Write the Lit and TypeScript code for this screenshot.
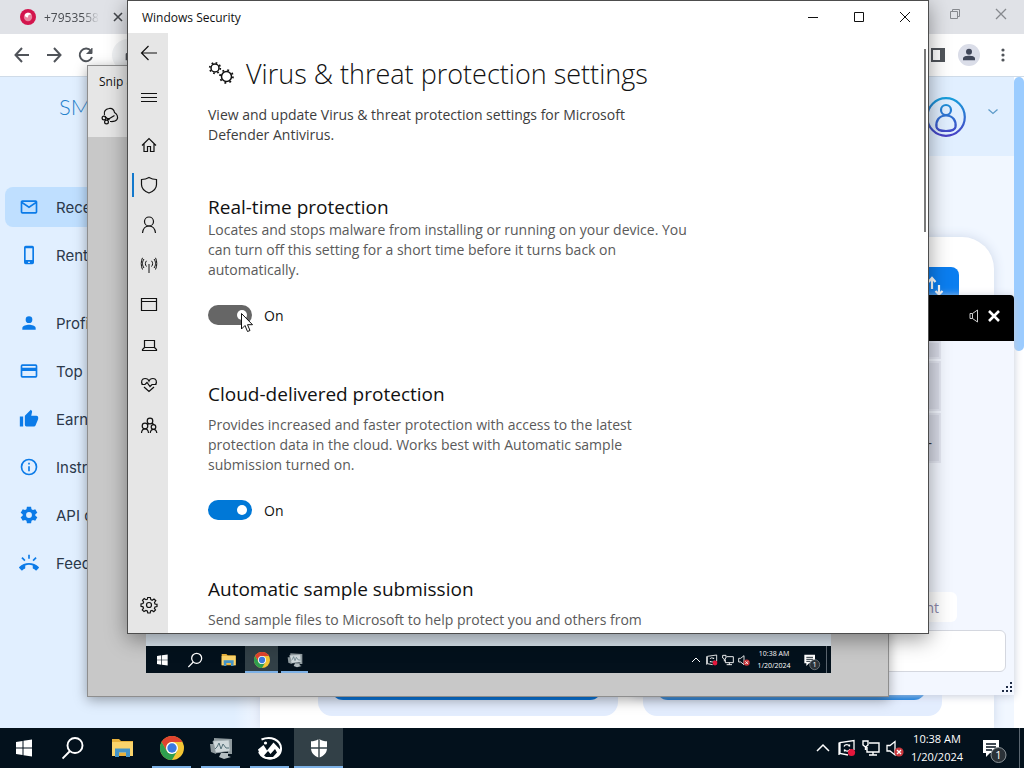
import { LitElement, html, svg, css } from "lit";
import { customElement, property } from "lit/decorators.js";

const navIcons: Record<string, unknown> = {
  back: svg`<path d="M19 12H5M11.500 5L4.500 12L11.500 19M4.500 12H20"/>`,
  menu: svg`<path d="M4 8.500H20M4 12.500H20M4 16.500H20"/>`,
  home: svg`<path d="M5 12.500L12 5.500L19 12.500M7 11V18.500H10.500V13.500H13.500V18.500H17V11"/>`,
  shield: svg`<path d="M12 4.500C14.500 6 17 6.500 19.500 6.500V11.500C19.500 16 16 18.500 12 20C8 18.500 4.500 16 4.500 11.500V6.500C7 6.500 9.500 6 12 4.500Z"/>`,
  person: svg`<circle cx="12" cy="8.500" r="4.500"/><path d="M5.500 20C6 15.500 8.500 13 12 13S18 15.500 18.500 20"/>`,
  network: svg`<path d="M12 11V20M9.500 13.500C8 11.800 8 9.500 9.500 7.800M14.500 13.500C16 11.800 16 9.500 14.500 7.800M7 15C5 12.500 5 8.500 7 6M17 15C19 12.500 19 8.500 17 6M5.500 16.500C3.800 13 3.800 8 5.500 4.800M18.500 16.500C20.200 13 20.200 8 18.500 4.800" stroke-width="1"/>`,
  app: svg`<path d="M4.500 5.500H19.500V17.500H4.500ZM4.500 8.500H19.500"/>`,
  device: svg`<path d="M7.500 7.500H17.500V14.500H7.500ZM7.500 14.500L5.500 16.500V17.500H19.500V16.500L17.500 14.500"/>`,
  health: svg`<path d="M5.500 11.500C3.500 8.500 5 5.500 8 5.500C10 5.500 11.500 6.500 12 8C12.500 6.500 14 5.500 16 5.500C19 5.500 20.500 8.500 18.500 11.500M4.500 11.500H8L10 9.500L13 13.500L15 11.500H19.500M7 14L12 18.500L17 14"/>`,
  family: svg`<circle cx="13" cy="8" r="2.800"/><circle cx="8" cy="13" r="2.800"/><circle cx="16.500" cy="14" r="2.300"/><path d="M4.500 20C4.700 17 6 15.800 8 15.800S11.300 17 11.500 20M13.200 20C13.500 17.500 14.500 16.300 16.500 16.300S19.500 17.500 19.800 20M10 11L12 10.800M15 10L17 11.700"/>`,
  gear: svg`<circle cx="12" cy="12" r="2.500"/><path d="M10.700 4.500H13.300L13.800 6.600L15.200 7.200L17 6L18.800 7.700L17.500 9.500L18 11L20 11.300V13.500L18 14L17.400 15.400L18.500 17L16.800 18.700L15 17.500L13.600 18L13.200 20H10.800L10.300 18L8.900 17.500L7 18.600L5.300 17L6.500 15.200L6 13.800L4 13.300V11L6 10.500L6.600 9L5.500 7.300L7.200 5.500L9 6.700L10.300 6.300Z"/>`,
};

const siteIcons: Record<string, unknown> = {
  mail: svg`<path fill-rule="evenodd" d="M4 4H20C21 4 22 5 22 6V18C22 19 21 20 20 20H4C3 20 2 19 2 18V6C2 5 3 4 4 4ZM4 8V18H20V8L12 13.500ZM4.500 6L12 11L19.500 6Z"/>`,
  phone: svg`<path fill-rule="evenodd" d="M8 1H16A2 2 0 0 1 18 3V21A2 2 0 0 1 16 23H8A2 2 0 0 1 6 21V3A2 2 0 0 1 8 1ZM8 4V18H16V4ZM11 20V21.500H13V20Z"/>`,
  person: svg`<circle cx="12" cy="8" r="4"/><path d="M4 20V18C4 15.300 9 14 12 14S20 15.300 20 18V20Z"/>`,
  card: svg`<path fill-rule="evenodd" d="M4 4H20A2 2 0 0 1 22 6V18A2 2 0 0 1 20 20H4A2 2 0 0 1 2 18V6A2 2 0 0 1 4 4ZM4 6V8H20V6ZM4 12V18H20V12Z"/>`,
  thumb: svg`<path d="M1 9H5V21H1ZM23 10A2 2 0 0 0 21 8H14.700L15.700 3.400C15.700 2.600 15.500 2.200 14.200 1L7.600 7.600C7.200 8 7 8.500 7 9V19A2 2 0 0 0 9 21H18C18.800 21 19.500 20.500 19.800 19.800L22.800 12.700C23 12.300 23 12 23 11.500Z"/>`,
  info: svg`<path fill-rule="evenodd" d="M12 2A10 10 0 1 0 12 22A10 10 0 1 0 12 2ZM12 4A8 8 0 1 1 12 20A8 8 0 1 1 12 4ZM11 7H13V9H11ZM11 11H13V17H11Z"/>`,
  gear: svg`<path fill-rule="evenodd" d="M9.500 2H14.500L15 5L16.800 6L19.500 5L22 9.300L19.600 11V13L22 14.700L19.500 19L16.800 18L15 19L14.500 22H9.500L9 19L7.200 18L4.500 19L2 14.700L4.400 13V11L2 9.300L4.500 5L7.200 6L9 5ZM12 8.500A3.500 3.500 0 1 0 12 15.500A3.500 3.500 0 1 0 12 8.500Z"/>`,
  call: svg`<path d="M23.700 16.700C20.600 13.800 16.500 12 12 12S3.400 13.800.3 16.700C.1 16.900 0 17.100 0 17.400S.1 17.900.3 18.100L2.800 20.600C3.200 21 3.700 20.900 4.200 20.600C5 19.900 5.900 19.300 6.900 18.900C7.200 18.700 7.500 18.400 7.500 18V14.900C10.400 14 13.600 14 16.500 14.900V18C16.500 18.400 16.700 18.700 17.100 18.900C18 19.300 19 19.900 19.800 20.600C20.300 20.900 20.800 21 21.200 20.600L23.700 18.100C24.100 17.700 24.100 17.100 23.700 16.700ZM21.200 6.300L19.800 4.800L16.200 8.400L17.600 9.800ZM13 2H11V7H13ZM6.400 9.800L7.800 8.400L4.300 4.800L2.800 6.300Z"/>`,
};

const chromeLogo = svg`
  <circle cx="12" cy="12" r="12" fill="#f4c534"/>
  <path d="M1.600 6A12 12 0 0 1 22.400 6H12A6 6 0 0 0 6.800 9L6.800 15Z" fill="#e0432f"/>
  <path d="M1.600 6L6.800 15A6 6 0 0 0 12 18L17.200 15L12 24A12 12 0 0 1 1.600 6Z" fill="#2f9e4f"/>
  <circle cx="12" cy="12" r="6" fill="#fff"/><circle cx="12" cy="12" r="4.700" fill="#3b79e0"/>`;

const taskIcons: Record<string, unknown> = {
  start: svg`<path fill="#fff" d="M3 6L9.500 5V11.500H3ZM10.500 4.800L19 3.600V11.500H10.500ZM3 12.500H9.500V19L3 18ZM10.500 12.500H19V20.400L10.500 19.200Z"/>`,
  search: svg`<g fill="none" stroke="#fff" stroke-width="1.900"><circle cx="13" cy="9.500" r="7.500"/><path d="M8 15L.5 22.500"/></g>`,
  folder: svg`<path fill="#e8b23c" d="M1 3H8L10 5H22V20H1Z"/><path fill="#fbd46b" d="M1 6H22V17H1Z"/><path fill="#4494c8" d="M4 12.500H19V21H15V16.500H8V21H4Z"/><path fill="#fbd46b" d="M1 17H4V20H1ZM19 17H22V20H19Z"/>`,
  chrome: chromeLogo,
  monitor: svg`<path fill="#8f9a9e" d="M5 2L23 3V18H19V6L5 7Z"/><path fill="#cfd8db" d="M4 5L20 4L21 15L6 17Z" stroke="#9ca8ac" stroke-width=".7"/><path fill="none" stroke="#547078" d="M6 13L8 11L10 7L12 13L14 8L17 12H20"/><path fill="#b3bdc1" d="M12 17H19V20L22 21L15 23L10 21Z"/><path fill="#8e999d" d="M1 8H5L7 18L2 16Z"/>`,
  photo: svg`<path fill="none" stroke="#fff" stroke-width="2" d="M3.500 3.500C13 -.5 22.500 4 23 12C23.300 18.500 18 22.500 12 22.500C7 22.500 3 20 1 16"/><circle cx="7.500" cy="7" r="1.600" fill="#fff"/><path fill="#fff" d="M0 13.500L5.500 9L9 14.500L15.500 6.500L23 14.500C22 20 17 23.500 12 23.500C6 23.500 2 20 0 13.500Z"/><path fill="#03111c" d="M6 19.500L10 15L12.500 18L17 13L19 16.500L15 21H8Z"/>`,
  defender: svg`<path fill="#fff" d="M12 3C14.500 4.600 17.500 5.300 20 5.300V11.300H12.700V4M11.300 4V11.300H4V5.300C6.500 5.300 9 4.600 11.300 3.200ZM4 12.700H11.300V21.500C7 19.700 4.400 17 4 12.700ZM12.700 12.700H20C19.600 17 17 19.700 12.700 21.500Z"/>`,
};

const trayIcons = [
  svg`<path fill="none" stroke="#fff" stroke-width="1.500" d="M6 15L12 9L18 15"/>`,
  svg`<g fill="none" stroke="#fff" stroke-width="1.300"><path d="M19 14V4.500L5 6.500V17.500L13 19M4 6.500V19M9 10.500A3 3 0 0 1 14.500 10.500V8.500M15 13A3 3 0 0 1 9.500 13.500V15.500"/></g><circle cx="16.500" cy="16.500" r="3.600" fill="#e5173c"/>`,
  svg`<g fill="none" stroke="#fff" stroke-width="1.400"><path d="M10 7H20V16H8V11M14 16V19M10 19H18M4 5H9V9L6.500 11L4 9ZM6.500 11V14"/></g>`,
  svg`<path fill="none" stroke="#fff" stroke-width="1.300" d="M4 9.500H7L12 5.500V19L7 15H4Z"/><circle cx="16" cy="16" r="4.600" fill="#c9363c"/><path stroke="#fff" stroke-width="1.300" d="M14 14L18 18M18 14L14 18"/>`,
];

@customElement("task-bar")
export class TaskBar extends LitElement {
  @property({ type: Boolean, reflect: true }) preview = false;
  @property() active = "defender";
  @property({ attribute: false }) running: string[] = [];
  @property({ attribute: false }) apps: string[] = [];

  static styles = css`
    :host {
      --h: 40px; --slot: 49px; --glyph: 24px; --tray: 24px; --clock: 60px; --text: 11px; --line: 18px; --note: 52px;
      display: flex; height: var(--h); background: #03111c; color: #fff;
      font-family: "Open Sans", sans-serif; flex: none;
    }
    :host([preview]) {
      --h: 27px; --slot: 33px; --glyph: 16px; --tray: 16px; --clock: 44px; --text: 7px; --line: 12px; --note: 30px;
    }
    .apps, .tray { display: flex; }
    .apps { flex: 1; }
    .task {
      width: var(--slot); height: var(--h); padding: 0; border: 0; background: none;
      display: grid; place-items: center; position: relative;
    }
    .task svg { width: var(--glyph); height: var(--glyph); }
    .active { background: #324047; }
    .running::after {
      content: ""; position: absolute; bottom: 0; left: 10%; right: 10%; height: 2px; background: #7db1e6;
    }
    .active::after { left: 0; right: 0; }
    .tray { align-items: center; }
    .tray > svg { width: var(--tray); height: var(--tray); }
    .clock { width: var(--clock); text-align: center; font-size: var(--text); line-height: var(--line); white-space: nowrap; }
    .note { width: var(--note); display: grid; place-items: center; }
    .note svg { width: var(--glyph); height: var(--glyph); overflow: visible; }
    .peek { width: 4px; border-left: 1px solid #5b6670; height: 100%; }
  `;

  render() {
    return html`
      <div class="apps">
        ${this.apps.map((name) => {
          const cls = `task ${name === this.active ? "active" : ""} ${this.running.includes(name) ? "running" : ""}`;
          const icon = html`<svg viewBox="0 0 24 24" aria-hidden="true">${taskIcons[name]}</svg>`;
          return this.preview
            ? html`<span class=${cls}>${icon}</span>`
            : html`<button class=${cls} aria-label=${name}>${icon}</button>`;
        })}
      </div>
      <div class="tray">
        ${trayIcons.map((i) => html`<svg viewBox="0 0 24 24" aria-hidden="true">${i}</svg>`)}
        <div class="clock"><div>10:38 AM</div><div>1/20/2024</div></div>
        <div class="note">
          <svg viewBox="0 0 24 24">
            <path fill="#fff" d="M2 4H18V17H9L5 21V17H2Z"/>
            <path stroke="#03111c" stroke-width="1.300" d="M5 8H15M5 11H15M5 14H11"/>
            <circle cx="17.500" cy="19" r="7.500" fill="#2b3238" stroke="#8c9499"/>
            <text x="17.500" y="23" font-size="11" text-anchor="middle" fill="#fff">1</text>
          </svg>
        </div>
        <div class="peek"></div>
      </div>`;
  }
}

@customElement("browser-window")
export class BrowserWindow extends LitElement {
  static styles = css`
    :host { display: flex; flex-direction: column; height: 100%; font-family: "Open Sans", sans-serif; background: #fff; }
    * { box-sizing: border-box; }
    button { border: 0; background: none; padding: 0; font: inherit; color: inherit; display: grid; place-items: center; }
    .tabs { height: 34px; background: #e0e2e7; display: flex; align-items: center; padding: 0 12px 0 20px; color: #4a4d52; flex: none; }
    .tab { display: flex; align-items: center; gap: 8px; font-size: 12px; }
    .tab .name { width: 60px; overflow: hidden; white-space: nowrap; -webkit-mask: linear-gradient(90deg, #000 64%, transparent 92%); }
    .controls { margin-left: auto; display: flex; gap: 24px; color: #86898e; align-items: center; }
    .bar { height: 43px; background: #fff; border-bottom: 1px solid #cfdbe8; display: flex; align-items: center; padding: 0 10px 0 10px; gap: 8px; color: #50545a; flex: none; }
    .address { flex: 1; height: 32px; border-radius: 16px; background: #f0f2f4; display: flex; align-items: center; padding-left: 11px; margin: 0 28px 0 6px; }
    .tools { display: flex; align-items: center; gap: 12px; }
    .avatar { width: 22px; height: 22px; border-radius: 50%; background: #dadde8; display: grid; place-items: center; }
    .page { flex: 1; min-height: 0; display: grid; grid-template-columns: 260px 1fr 10px; overflow: hidden; }
    .side { background: linear-gradient(90deg, #e1efff 90%, #f1f6ff 100%); padding: 0 5px; color: #2c394b; }
    .logo { font: 300 22px/30px Lato, sans-serif; color: #2580cb; padding: 15px 0 0 54px; height: 110px; margin: 0; }
    nav { display: flex; flex-direction: column; gap: 8px; }
    nav a { display: flex; align-items: center; gap: 17px; height: 40px; padding-left: 14px; border-radius: 8px; color: inherit; text-decoration: none; font: 15px Inter, sans-serif; white-space: nowrap; }
    nav svg { width: 20px; height: 20px; fill: #0c7be8; }
    nav .on { background: #bfdfff; }
    nav .split { margin-top: 20px; }
    .main { display: flex; flex-direction: column; min-width: 0; background: #f1f7ff; }
    .head { height: 79px; background: #e1efff; display: flex; align-items: center; justify-content: flex-end; gap: 20px; padding-right: 14px; flex: none; }
    .panel { flex: 1; margin: 81px 20px 0 0; background: #fff; border-radius: 0 32px 0 0; box-shadow: 0 0 12px #ced8ea; padding: 30px 35px 12px 58px; display: flex; flex-direction: column; justify-content: space-between; }
    .swap { align-self: flex-end; width: 48px; height: 40px; border-radius: 8px; background: #0b7ef0; padding-bottom: 6px; }
    .offers { display: grid; grid-template-columns: 1fr 1fr; gap: 25px; padding-right: 17px; }
    .offer { background: #e3edfe; border-radius: 14px; padding: 30px 16px 16px 13px; }
    .offer button { width: 100%; height: 40px; border-radius: 12px; background: #0b78de; }
    .thumb { height: 274px; background: #9bccff; border-radius: 6px; }
    .chat { position: absolute; right: 10px; bottom: 33px; width: 380px; height: 400px; display: flex; flex-direction: column; background: #f3f7ff; box-shadow: 0 1px 8px #c4cad8; border-radius: 4px 4px 0 0; }
    .chat header { height: 46px; background: #000; color: #fff; border-radius: 4px 4px 0 0; display: flex; align-items: center; justify-content: flex-end; gap: 6px; padding: 0 12px 4px 0; flex: none; }
    .log { flex: 1; display: flex; flex-direction: column; gap: 2px; padding: 0 73px 0 60px; }
    .log div { background: #d9dce8; border: 2px solid #e4e7f2; height: 50px; color: #333; font-size: 14px; text-align: right; padding: 18px 7px 0; }
    .log .first { height: 18px; padding: 0; }
    .quick { align-self: flex-end; margin-right: 57px; height: 30px; padding: 0 18px; background: #fff; color: #8d88ab; font-size: 14px; border-radius: 6px; }
    .chat input { margin: 8px 8px 0; height: 42px; border: 1px solid #d4d7df; border-radius: 6px; background: #fff; flex: none; }
    .grip { height: 23px; display: flex; justify-content: flex-end; align-items: center; padding: 9px 1px 0 0; flex: none; }
  `;

  private item(icon: string, label: string, cls = "") {
    return html`<a href="#" class=${cls}><svg viewBox="0 0 24 24" aria-hidden="true">${siteIcons[icon]}</svg>${label}</a>`;
  }

  render() {
    return html`
      <div class="tabs">
        <div class="tab">
          <svg width="16" height="16" viewBox="0 0 16 16"><circle cx="8" cy="8" r="8" fill="#d3154d"/><circle cx="8" cy="8" r="4.200" fill="#e8849f"/><path d="M5 5.500C6 3.500 10 3 11.500 5.500C9 5 8 6 8 8.500C6 8.500 4.500 7.500 5 5.500Z" fill="#fff"/></svg>
          <span class="name">+7953558</span>
          <button aria-label="Close tab"><svg width="12" height="12" viewBox="0 0 12 12" stroke="#44474c" stroke-width="1.600"><path d="M2 2L10 10M10 2L2 10"/></svg></button>
        </div>
        <div class="controls">
          <button aria-label="Restore"><svg width="22" height="22" viewBox="0 0 22 22" fill="none" stroke="currentColor"><path d="M6.500 7.500H13.500V14.500H6.500ZM8.500 7.500V5.500H15.500V12.500H13.500" transform="translate(0 -2)"/></svg></button>
          <button aria-label="Close"><svg width="22" height="22" viewBox="0 0 22 22" fill="none" stroke="currentColor" stroke-width="1.300"><path d="M6 3L16 13M16 3L6 13"/></svg></button>
        </div>
      </div>
      <div class="bar">
        <button aria-label="Back"><svg width="24" height="24" viewBox="0 0 24 24" fill="none" stroke="currentColor" stroke-width="2"><path d="M19 12H6M12 5L5.500 12L12 19"/></svg></button>
        <button aria-label="Forward"><svg width="24" height="24" viewBox="0 0 24 24" fill="none" stroke="currentColor" stroke-width="2"><path d="M5 12H18M12 5L18.500 12L12 19"/></svg></button>
        <button aria-label="Reload"><svg width="24" height="24" viewBox="0 0 24 24" fill="none" stroke="currentColor" stroke-width="2"><path d="M17 8A6.300 6.300 0 1 0 18 14"/><path d="M18 5V10.500H12.500" fill="currentColor" stroke-width="1"/></svg></button>
        <div class="address"><svg width="16" height="16" viewBox="0 0 24 24" fill="#50545a"><path fill-rule="evenodd" d="M6 9H7V7A5 5 0 0 1 17 7V9H18A2 2 0 0 1 20 11V20H4V11A2 2 0 0 1 6 9ZM9 9H15V7A3 3 0 0 0 9 7Z"/></svg></div>
        <div class="tools">
          <svg width="16" height="16" viewBox="0 0 16 16"><path fill="none" stroke="currentColor" stroke-width="2" d="M2 2H14V14H2Z"/><path fill="currentColor" d="M10 2H15V14H10Z"/></svg>
          <span class="avatar"><svg width="16" height="16" viewBox="0 0 24 24" fill="#3f4658"><circle cx="12" cy="7" r="4.500"/><path d="M3 20V17C3 14 8 13 12 13S21 14 21 17V20Z"/></svg></span>
          <svg width="22" height="16" viewBox="0 0 22 16" fill="currentColor"><circle cx="11" cy="3" r="1.600"/><circle cx="11" cy="8" r="1.600"/><circle cx="11" cy="13" r="1.600"/></svg>
        </div>
      </div>
      <div class="page">
        <div class="side">
          <p class="logo">SMS</p>
          <nav>
            ${this.item("mail", "Receive", "on")}
            ${this.item("phone", "Rent")}
            ${this.item("person", "Profile", "split")}
            ${this.item("card", "Top up")}
            ${this.item("thumb", "Earn")}
            ${this.item("info", "Instruction")}
            ${this.item("gear", "API docs")}
            ${this.item("call", "Feedback")}
          </nav>
        </div>
        <div class="main">
          <div class="head">
            <svg width="40" height="40" viewBox="0 0 40 40" fill="none" stroke="url(#g)" stroke-width="2.200">
              <defs><linearGradient id="g" x1="0" y1="0" x2="0" y2="40" gradientUnits="userSpaceOnUse"><stop offset="0" stop-color="#16a0dc"/><stop offset="1" stop-color="#4a3cc4"/></linearGradient></defs>
              <circle cx="20" cy="20" r="18.800"/><circle cx="20" cy="13" r="5"/><path d="M20 18.500C13 18.500 9.500 24 10.500 30C11 33.500 16 34 20 34S29 33.500 29.500 30C30.500 24 27 18.500 20 18.500Z"/>
            </svg>
            <svg width="14" height="20" viewBox="0 0 14 20" fill="none" stroke="#5d9bc9" stroke-width="1.300"><path d="M2.500 2.500L7 6.500L11.500 2.500"/></svg>
          </div>
          <div class="panel">
            <button class="swap" aria-label="Swap"><svg width="20" height="24" viewBox="0 0 20 24" fill="none" stroke="#fff" stroke-width="2.200"><path d="M7 17V6.500M3.500 10L7 6L10.500 10M14 13V23M10.500 19L14 22.500L17.500 19"/></svg></button>
            <div class="offers">
              <div class="offer"><button aria-label="Buy"></button></div>
              <div class="offer"><button aria-label="Order"></button></div>
            </div>
          </div>
        </div>
        <div class="thumb"></div>
      </div>
      <section class="chat">
        <header>
          <button aria-label="Sound"><svg width="12" height="14" viewBox="0 0 12 14" fill="none" stroke="#ccc"><path d="M2 4.500H4.500L9.500 1V13L4.500 9.500H2ZM4.500 4.500V9.500"/></svg></button>
          <button aria-label="Close chat"><svg width="16" height="16" viewBox="0 0 16 16" stroke="#fff" stroke-width="2.600"><path d="M3 3L13 13M13 3L3 13"/></svg></button>
        </header>
        <div class="log"><div class="first"></div><div></div><div>-</div></div>
        <button class="quick">Comment</button>
        <input type="text" aria-label="Message" />
        <div class="grip"><svg width="12" height="12" viewBox="0 0 12 12" fill="#1d2a44"><path d="M9 0h2v2h-2zM5 4h2v2h-2zM9 4h2v2h-2zM1 8h2v2h-2zM5 8h2v2h-2zM9 8h2v2h-2z"/></svg></div>
      </section>`;
  }
}

@customElement("snip-window")
export class SnipWindow extends LitElement {
  static styles = css`
    :host { display: flex; flex-direction: column; background: #c8c8c8; border: 1px solid #8e8e8e; box-shadow: 0 3px 12px rgba(0, 0, 0, 0.35); box-sizing: border-box; font-family: "Open Sans", sans-serif; }
    .title { height: 32px; line-height: 32px; padding-left: 11px; font-size: 12px; background: #e6e6e6; color: #111; }
    .tools { height: 39px; background: #e6e6e6; padding: 7px 0 0 10px; box-sizing: border-box; }
    button { border: 0; background: none; padding: 0; width: 24px; height: 24px; }
    .canvas { flex: 1; display: flex; flex-direction: column; justify-content: flex-end; padding: 0 57px 23px 58px; }
    .shot { background: #dbe6f0; padding-top: 60px; }
  `;
  render() {
    return html`
      <div class="title">Snip &amp; Sketch</div>
      <div class="tools">
        <button aria-label="New snip"><svg width="20" height="20" viewBox="0 0 20 20" fill="none" stroke="#111" stroke-width="1.200"><path d="M4.500 9C3.500 5.500 5.500 3 9 2.500C12 2 14 4 14.500 6.500C17 8 18.500 11 17 13.500C15.500 16 12.500 15.500 10 15.500M7 14L14.500 9.500M4.500 10.500L9.500 14"/><circle cx="4" cy="12" r="1.900"/><circle cx="6.500" cy="16" r="1.900"/></svg></button>
      </div>
      <div class="canvas">
        <div class="shot">
          <task-bar preview active="chrome" .apps=${["start", "search", "folder", "chrome", "monitor"]} .running=${["chrome", "monitor"]}></task-bar>
        </div>
      </div>`;
  }
}

@customElement("security-window")
export class SecurityWindow extends LitElement {
  static styles = css`
    :host { display: flex; flex-direction: column; background: #fff; border: 1px solid #4d4d4d; box-shadow: 0 5px 20px rgba(0, 0, 0, 0.4); box-sizing: border-box; font-family: "Open Sans", sans-serif; color: #111; }
    * { box-sizing: border-box; }
    button { border: 0; background: none; padding: 0; display: grid; place-items: center; color: inherit; }
    .title { height: 32px; display: flex; align-items: center; padding-left: 14px; font-size: 12px; flex: none; }
    .title .controls { margin-left: auto; display: flex; }
    .controls button { width: 46px; height: 32px; }
    .body { flex: 1; min-height: 0; display: flex; }
    nav { width: 40px; background: #e6e6e6; display: flex; flex-direction: column; padding-bottom: 8px; flex: none; }
    nav button { width: 40px; height: 40px; padding-left: 2px; position: relative; flex: none; }
    nav svg { width: 24px; height: 24px; fill: none; stroke: #111; stroke-width: 1.200; }
    .menu { margin: 4px 0 8px; }
    .last { margin-top: auto; }
    .current::before { content: ""; position: absolute; left: 4px; top: 8px; width: 2px; height: 24px; background: #1278cc; }
    main { flex: 1; min-width: 0; overflow: hidden; padding: 21px 40px 0 40px; }
    .bar { width: 2px; height: 183px; margin: 16px 2px 0 0; background: #7a7a7a; flex: none; }
    h1 { display: flex; align-items: center; gap: 10px; margin: 0; font-size: 27px; line-height: 40px; font-weight: 300; white-space: nowrap; }
    h1 svg { flex: none; }
    h2 { margin: 0; font-size: 19px; line-height: 28px; font-weight: 400; }
    p { margin: 0; font-size: 14px; line-height: 20px; color: #5a5a5a; max-width: 492px; }
    .lead { color: #3d3d3d; margin: 11px 0 48px; max-width: 440px; }
    section { margin-bottom: 55px; }
    section p { margin-top: 7px; }
    .narrow { max-width: 450px; }
    .tight p { margin-top: -1px; }
    label { display: flex; align-items: center; gap: 12px; margin-top: 25px; height: 20px; font-size: 14px; width: max-content; }
    input { appearance: none; margin: 0; width: 44px; height: 20px; border-radius: 10px; background: #0078d7; display: flex; align-items: center; justify-content: flex-end; padding-right: 5px; }
    input::before { content: ""; width: 10px; height: 10px; border-radius: 50%; background: #fff; }
    .pressed { background: #666; }
  `;

  private nav(name: string, cls = "") {
    return html`<button class=${cls} aria-label=${name}><svg viewBox="0 0 24 24">${navIcons[name]}</svg></button>`;
  }

  render() {
    return html`
      <div class="title">
        <span>Windows Security</span>
        <div class="controls">
          <button aria-label="Minimize"><svg width="12" height="12" stroke="#111"><path d="M1 6.500H11"/></svg></button>
          <button aria-label="Maximize"><svg width="12" height="12" fill="none" stroke="#111"><path d="M1.500 1.500H10.500V10.500H1.500Z"/></svg></button>
          <button aria-label="Close"><svg width="12" height="12" stroke="#111"><path d="M1 1L11 11M11 1L1 11"/></svg></button>
        </div>
      </div>
      <div class="body">
        <nav>
          ${this.nav("back")}${this.nav("menu", "menu")}${this.nav("home")}${this.nav("shield", "current")}
          ${["person", "network", "app", "device", "health", "family"].map((n) => this.nav(n))}
          ${this.nav("gear", "last")}
        </nav>
        <main>
          <h1>
            <svg width="28" height="28" viewBox="0 0 28 28" fill="none" stroke="#111">
              <circle cx="7" cy="8" r="4" stroke-width="1.500"/><circle cx="7" cy="8" r="5.300" stroke-width="1.700" stroke-dasharray="1.700 2.460"/>
              <circle cx="18.500" cy="16.500" r="5" stroke-width="1.500"/><circle cx="18.500" cy="16.500" r="6.500" stroke-width="1.700" stroke-dasharray="1.900 3.205"/>
            </svg>
            Virus &amp; threat protection settings
          </h1>
          <p class="lead">View and update Virus &amp; threat protection settings for Microsoft Defender Antivirus.</p>
          <section class="tight">
            <h2>Real-time protection</h2>
            <p>Locates and stops malware from installing or running on your device. You can turn off this setting for a short time before it turns back on automatically.</p>
            <label><input class="pressed" type="checkbox" role="switch" checked />On</label>
          </section>
          <section>
            <h2>Cloud-delivered protection</h2>
            <p class="narrow">Provides increased and faster protection with access to the latest protection data in the cloud. Works best with Automatic sample submission turned on.</p>
            <label><input type="checkbox" role="switch" checked />On</label>
          </section>
          <section>
            <h2>Automatic sample submission</h2>
            <p class="narrow">Send sample files to Microsoft to help protect you and others from</p>
          </section>
        </main>
        <div class="bar"></div>
      </div>`;
  }
}

@customElement("app-root")
export class AppRoot extends LitElement {
  static styles = css`
    :host { display: flex; flex-direction: column; height: 100vh; overflow: hidden; }
    .desktop { flex: 1; position: relative; min-height: 0; overflow: hidden; }
    snip-window { position: absolute; inset: 65px 135px 31px 87px; }
    security-window { position: absolute; inset: 0 95px 94px 127px; }
    .cursor { position: absolute; left: 240px; top: 312px; }
  `;
  render() {
    return html`
      <div class="desktop">
        <browser-window></browser-window>
        <snip-window></snip-window>
        <security-window></security-window>
        <svg class="cursor" width="14" height="21" viewBox="0 0 14 21" fill="#fff" stroke="#111"><path d="M1.500 1.500V17L5 13.500L7.500 19.500L10 18.500L7.500 12.700H12.500Z"/></svg>
      </div>
      <task-bar active="defender" .apps=${["start", "search", "folder", "chrome", "monitor", "photo", "defender"]} .running=${["chrome", "monitor", "photo", "defender"]}></task-bar>`;
  }
}
